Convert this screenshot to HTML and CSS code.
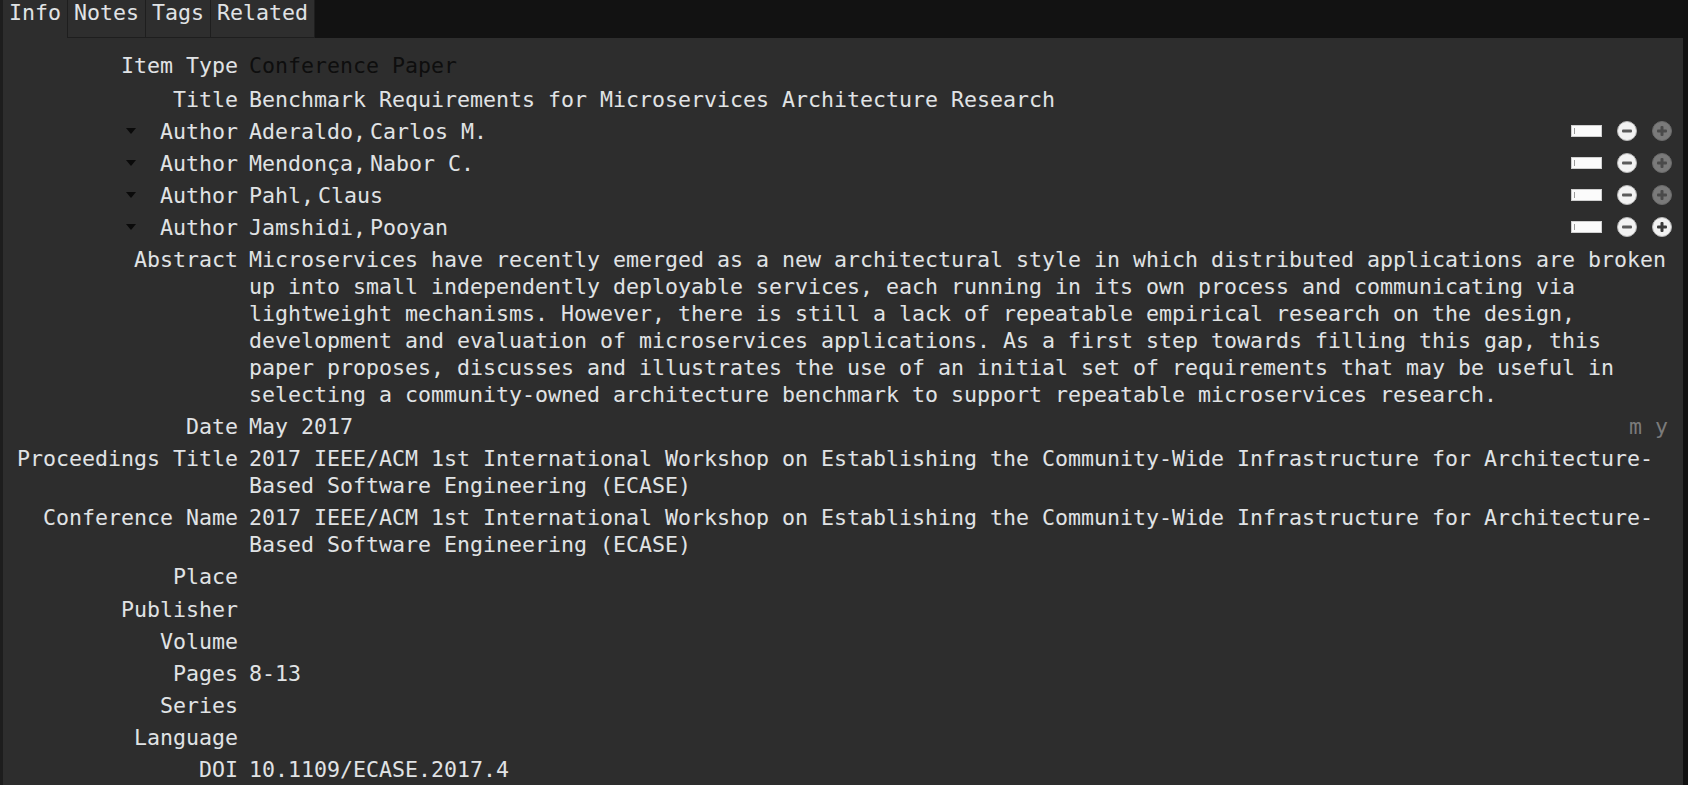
FILE: index.html
```html
<!DOCTYPE html>
<html>
<head>
<meta charset="utf-8">
<link rel="stylesheet" href="styles.css">
</head>
<body>
<div class="window">
  <div class="tabs">
    <div class="tab active">Info</div>
    <div class="tab">Notes</div>
    <div class="tab">Tags</div>
    <div class="tab">Related</div>
    <div class="tab-fill"></div>
  </div>
  <div class="panel">
    <div class="row row-type"><div class="label">Item Type</div><div class="value dark">Conference Paper</div></div>
    <div class="row"><div class="label">Title</div><div class="value">Benchmark Requirements for Microservices Architecture Research</div></div>

    <div class="row"><div class="label"><span class="caret"></span>Author</div><div class="value creator"><span class="name"><span>Aderaldo,</span><span class="first">Carlos M.</span></span><span class="controls"><span class="field-switch"></span><svg class="btn" width="20" height="20" viewBox="0 0 20 20"><circle cx="10" cy="10" r="9.5" class="btn-on"/><rect x="5" y="8.5" width="10" height="3" rx="1" fill="#5a5a5a"/></svg><svg class="btn" width="20" height="20" viewBox="0 0 20 20"><circle cx="10" cy="10" r="9.5" class="btn-off"/><rect x="5" y="8.5" width="10" height="3" rx="1" fill="#4a4a4a"/><rect x="8.5" y="5" width="3" height="10" rx="1" fill="#4a4a4a"/></svg></span></div></div>

    <div class="row"><div class="label"><span class="caret"></span>Author</div><div class="value creator"><span class="name"><span>Mendonça,</span><span class="first">Nabor C.</span></span><span class="controls"><span class="field-switch"></span><svg class="btn" width="20" height="20" viewBox="0 0 20 20"><circle cx="10" cy="10" r="9.5" class="btn-on"/><rect x="5" y="8.5" width="10" height="3" rx="1" fill="#5a5a5a"/></svg><svg class="btn" width="20" height="20" viewBox="0 0 20 20"><circle cx="10" cy="10" r="9.5" class="btn-off"/><rect x="5" y="8.5" width="10" height="3" rx="1" fill="#4a4a4a"/><rect x="8.5" y="5" width="3" height="10" rx="1" fill="#4a4a4a"/></svg></span></div></div>

    <div class="row"><div class="label"><span class="caret"></span>Author</div><div class="value creator"><span class="name"><span>Pahl,</span><span class="first">Claus</span></span><span class="controls"><span class="field-switch"></span><svg class="btn" width="20" height="20" viewBox="0 0 20 20"><circle cx="10" cy="10" r="9.5" class="btn-on"/><rect x="5" y="8.5" width="10" height="3" rx="1" fill="#5a5a5a"/></svg><svg class="btn" width="20" height="20" viewBox="0 0 20 20"><circle cx="10" cy="10" r="9.5" class="btn-off"/><rect x="5" y="8.5" width="10" height="3" rx="1" fill="#4a4a4a"/><rect x="8.5" y="5" width="3" height="10" rx="1" fill="#4a4a4a"/></svg></span></div></div>

    <div class="row"><div class="label"><span class="caret"></span>Author</div><div class="value creator"><span class="name"><span>Jamshidi,</span><span class="first">Pooyan</span></span><span class="controls"><span class="field-switch"></span><svg class="btn" width="20" height="20" viewBox="0 0 20 20"><circle cx="10" cy="10" r="9.5" class="btn-on"/><rect x="5" y="8.5" width="10" height="3" rx="1" fill="#5a5a5a"/></svg><svg class="btn" width="20" height="20" viewBox="0 0 20 20"><circle cx="10" cy="10" r="9.5" class="btn-on"/><rect x="5" y="8.5" width="10" height="3" rx="1" fill="#3a3a3a"/><rect x="8.5" y="5" width="3" height="10" rx="1" fill="#3a3a3a"/></svg></span></div></div>

    <div class="row"><div class="label">Abstract</div><div class="value">Microservices have recently emerged as a new architectural style in which distributed applications are broken up into small independently deployable services, each running in its own process and communicating via lightweight mechanisms. However, there is still a lack of repeatable empirical research on the design, development and evaluation of microservices applications. As a first step towards filling this gap, this paper proposes, discusses and illustrates the use of an initial set of requirements that may be useful in selecting a community-owned architecture benchmark to support repeatable microservices research.</div></div>
    <div class="row"><div class="label">Date</div><div class="value date"><span>May 2017</span><span class="hint">m y</span></div></div>
    <div class="row"><div class="label">Proceedings Title</div><div class="value">2017 IEEE/ACM 1st International Workshop on Establishing the Community-Wide Infrastructure for Architecture-Based Software Engineering (ECASE)</div></div>
    <div class="row"><div class="label">Conference Name</div><div class="value">2017 IEEE/ACM 1st International Workshop on Establishing the Community-Wide Infrastructure for Architecture-Based Software Engineering (ECASE)</div></div>
    <div class="row"><div class="label">Place</div><div class="value"></div></div>
    <div class="row"><div class="label">Publisher</div><div class="value"></div></div>
    <div class="row"><div class="label">Volume</div><div class="value"></div></div>
    <div class="row"><div class="label">Pages</div><div class="value">8-13</div></div>
    <div class="row"><div class="label">Series</div><div class="value"></div></div>
    <div class="row"><div class="label">Language</div><div class="value"></div></div>
    <div class="row"><div class="label">DOI</div><div class="value">10.1109/ECASE.2017.4</div></div>
  </div>
</div>
</body>
</html>
```
FILE: styles.css
```css
html, body {
  margin: 0;
  padding: 0;
  height: 100%;
  overflow: hidden;
  background: #111111;
}

.window {
  height: 100vh;
  display: flex;
  flex-direction: column;
  border-left: 3px solid #1d1d1d;
  border-right: 5px solid #111111;
  font-family: "DejaVu Sans Mono", "Liberation Mono", monospace;
  font-size: 21.6px;
  color: #e0e3e5;
}

.tabs {
  display: flex;
  height: 38px;
  flex: none;
  background: #121212;
}

.tab {
  box-sizing: border-box;
  height: 38px;
  padding: 1px 6px 0;
  line-height: 24px;
  background: #2e2e2e;
  border-left: 1px solid #1e1e1e;
  border-bottom: 1px solid #1e1e1e;
  white-space: nowrap;
}

.tab.active {
  background: #2d2d2d;
  border-left: none;
  border-bottom: none;
}

.tab-fill {
  flex: 1;
  border-left: 1px solid #1e1e1e;
}

.panel {
  flex: 1;
  background: #2d2d2d;
  padding: 11.5px 11px 0 0;
}

.row {
  display: flex;
  gap: 11px;
  padding: 2.55px 0;
  line-height: 27px;
}

.row-type {
  padding-bottom: 4px;
}

.label {
  flex: none;
  width: 235px;
  display: flex;
  justify-content: flex-end;
  align-items: center;
  align-self: flex-start;
  height: 27px;
  white-space: nowrap;
}

.value {
  flex: 1;
  min-width: 0;
  min-height: 27px;
}

.value.dark {
  color: #0e0e0e;
}

.caret {
  width: 0;
  height: 0;
  border-left: 5px solid transparent;
  border-right: 5px solid transparent;
  border-top: 6px solid #0a0a0a;
  margin-right: 24px;
}

.creator {
  display: flex;
  align-items: center;
  justify-content: space-between;
}

.name {
  display: flex;
}

.first {
  margin-left: 4px;
}

.controls {
  display: flex;
  align-items: center;
  gap: 15px;
}

.field-switch {
  box-sizing: border-box;
  width: 31px;
  height: 12px;
  background: #fbfbfb;
  border: 1px solid #cfcfcf;
  position: relative;
}

.field-switch::before {
  content: "";
  position: absolute;
  left: 2px;
  top: 2px;
  width: 1px;
  height: 6px;
  background: #9a9a9a;
}

.btn {
  display: block;
}

.btn-on {
  fill: #f2f2f2;
  stroke: #b5b5b5;
  stroke-width: 1;
}

.btn-off {
  fill: #7a7a7a;
  stroke: #6a6a6a;
  stroke-width: 1;
}

.date {
  display: flex;
  justify-content: space-between;
}

.hint {
  color: #7b7b7b;
  margin-right: 4px;
}
```
